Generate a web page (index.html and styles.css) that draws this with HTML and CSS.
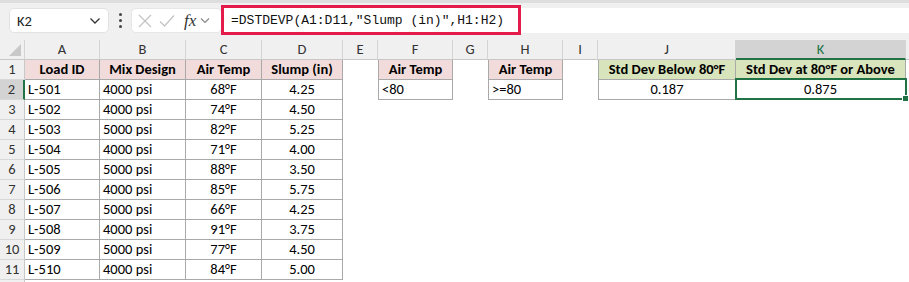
FILE: index.html
```html
<!DOCTYPE html>
<html>
<head>
<meta charset="utf-8">
<link rel="stylesheet" href="styles.css">
</head>
<body>
<div class="toolbar">
  <div class="namebox"><span>K2</span>
    <svg class="chev" width="12" height="8" viewBox="0 0 12 8"><path d="M1.5 1.5 L6 6 L10.5 1.5" fill="none" stroke="#333" stroke-width="1.3"/></svg>
  </div>
  <div class="dots"><i></i><i></i><i></i></div>
  <div class="iconbox">
    <svg width="14" height="14" viewBox="0 0 14 14"><path d="M1 1 L13 13 M13 1 L1 13" stroke="#c4c4c4" stroke-width="1.3" fill="none"/></svg>
    <svg width="16" height="14" viewBox="0 0 16 14"><path d="M1 7.5 L5.5 12 L15 1.5" stroke="#c4c4c4" stroke-width="1.3" fill="none"/></svg>
    <span class="fx">fx</span>
    <svg width="10" height="7" viewBox="0 0 10 7"><path d="M1 1.5 L5 5.5 L9 1.5" fill="none" stroke="#888" stroke-width="1.2"/></svg>
  </div>
  <div class="formula">=DSTDEVP(A1:D11,"Slump (in)",H1:H2)</div>
  <div class="highlight"></div>
</div>
<div class="sheet">
  <div class="corner"><svg width="12" height="12" viewBox="0 0 12 12"><path d="M12 0 L12 12 L0 12 Z" fill="#c8c8c8"/></svg></div>
  <div class="ch">A</div><div class="ch">B</div><div class="ch">C</div><div class="ch">D</div><div class="ch">E</div><div class="ch">F</div><div class="ch">G</div><div class="ch">H</div><div class="ch">I</div><div class="ch">J</div><div class="ch sel">K</div><div class="ch last"></div>

  <div class="rh">1</div>
  <div class="c b hd pink">Load ID</div><div class="c b hd pink">Mix Design</div><div class="c b hd pink">Air Temp</div><div class="c b hd pink">Slump (in)</div>
  <div class="c"></div><div class="c b bl hd pink">Air Temp</div><div class="c"></div><div class="c b bl hd pink">Air Temp</div><div class="c"></div>
  <div class="c b bl hd green">Std Dev Below 80°F</div><div class="c b hd green">Std Dev at 80°F or Above</div><div class="c"></div>

  <div class="rh rsel">2</div>
  <div class="c b">L-501</div><div class="c b">4000 psi</div><div class="c b ctr">68°F</div><div class="c b ctr">4.25</div>
  <div class="c"></div><div class="c b bl">&lt;80</div><div class="c"></div><div class="c b bl">&gt;=80</div><div class="c"></div>
  <div class="c b bl ctr">0.187</div><div class="c b ctr active">0.875</div><div class="c"></div>

  <div class="rh">3</div><div class="c b">L-502</div><div class="c b">4000 psi</div><div class="c b ctr">74°F</div><div class="c b ctr">4.50</div><div class="c span8"></div>
  <div class="rh">4</div><div class="c b">L-503</div><div class="c b">5000 psi</div><div class="c b ctr">82°F</div><div class="c b ctr">5.25</div><div class="c span8"></div>
  <div class="rh">5</div><div class="c b">L-504</div><div class="c b">4000 psi</div><div class="c b ctr">71°F</div><div class="c b ctr">4.00</div><div class="c span8"></div>
  <div class="rh">6</div><div class="c b">L-505</div><div class="c b">5000 psi</div><div class="c b ctr">88°F</div><div class="c b ctr">3.50</div><div class="c span8"></div>
  <div class="rh">7</div><div class="c b">L-506</div><div class="c b">4000 psi</div><div class="c b ctr">85°F</div><div class="c b ctr">5.75</div><div class="c span8"></div>
  <div class="rh">8</div><div class="c b">L-507</div><div class="c b">5000 psi</div><div class="c b ctr">66°F</div><div class="c b ctr">4.25</div><div class="c span8"></div>
  <div class="rh">9</div><div class="c b">L-508</div><div class="c b">4000 psi</div><div class="c b ctr">91°F</div><div class="c b ctr">3.75</div><div class="c span8"></div>
  <div class="rh">10</div><div class="c b">L-509</div><div class="c b">5000 psi</div><div class="c b ctr">77°F</div><div class="c b ctr">4.50</div><div class="c span8"></div>
  <div class="rh">11</div><div class="c b">L-510</div><div class="c b">4000 psi</div><div class="c b ctr">84°F</div><div class="c b ctr">5.00</div><div class="c span8"></div>
  <div class="rh stub"></div><div class="c span12 stub"></div>
</div>
</body>
</html>
```

FILE: styles.css
```css
* { box-sizing: border-box; }
html, body { margin: 0; padding: 0; background: #fff; overflow: hidden; }
body { width: 909px; height: 282px; font-family: Carlito, Lato, "Liberation Sans", sans-serif; color: #000; }

.toolbar {
  position: relative;
  height: 40px;
  background: #f0f0f0;
  border-top: 3px solid #dedede;
  display: flex;
  align-items: flex-start;
  padding-top: 5px;
}
.namebox {
  margin-left: 9px;
  width: 100px;
  height: 25px;
  background: #fff;
  border: 1px solid #e2e2e2;
  border-radius: 5px;
  display: flex;
  align-items: center;
  justify-content: space-between;
  padding: 0 7px 0 7px;
  font-size: 14.5px;
  color: #222;
}
.namebox .chev { margin-top: 1px; }
.dots {
  width: 22px;
  height: 25px;
  display: flex;
  flex-direction: column;
  align-items: center;
  justify-content: center;
  gap: 3px;
}
.dots i { display: block; width: 3px; height: 3px; background: #444; border-radius: 50%; }
.iconbox {
  width: 91px;
  height: 25px;
  background: #fff;
  border: 1px solid #e6e6e6;
  border-radius: 5px;
  display: flex;
  align-items: center;
  padding-left: 6px;
  gap: 8px;
}
.iconbox svg:nth-child(2) { margin-left: -1px; }
.fx {
  font-family: "Liberation Serif", "DejaVu Serif", serif;
  font-style: italic;
  font-size: 17px;
  color: #333;
  margin-left: 1px;
  margin-right: -4px;
}
.formula {
  flex: 1;
  height: 25px;
  background: #fff;
  font-family: "Liberation Mono", "DejaVu Sans Mono", monospace;
  font-size: 13px;
  line-height: 25px;
  padding-left: 9px;
  color: #111;
}
.highlight {
  position: absolute;
  left: 221px;
  top: 2px;
  width: 300px;
  height: 30px;
  border: 3px solid #e31c4c;
}

.sheet {
  display: grid;
  grid-template-columns: 25px 75px 86px 76px 81px 35px 75px 35px 75px 35px 138px 170px 1fr;
  grid-template-rows: repeat(12, 20px) 2px;
  height: 242px;
  overflow: hidden;
}
.corner {
  background: #f0f0f0;
  border-right: 1px solid #d4d4d4;
  border-bottom: 1px solid #c8c8c8;
  display: flex;
  align-items: flex-end;
  justify-content: flex-end;
  padding: 0 3px 3px 0;
}
.ch {
  background: #f0f0f0;
  border-right: 1px solid #d4d4d4;
  border-bottom: 1px solid #c8c8c8;
  text-align: center;
  font-size: 14.5px;
  line-height: 19px;
  color: #333;
}
.ch.sel {
  background: #d3d3d3;
  color: #217346;
  border-bottom: 2px solid #217346;
}
.ch.last { border-right: none; }
.rh {
  grid-column: 1;
  background: #f0f0f0;
  border-right: 1px solid #c8c8c8;
  border-bottom: 1px solid #d8d8d8;
  text-align: center;
  font-size: 14.5px;
  line-height: 19px;
  color: #333;
}
.rh.rsel {
  background: #d3d3d3;
  border-right: 2px solid #217346;
}
.rh.stub { border-bottom: none; }
.c {
  font-size: 14.5px;
  line-height: 19px;
  padding-left: 3px;
  white-space: nowrap;
  overflow: hidden;
}
.span8 { grid-column: span 8; }
.span12 { grid-column: span 12; }
.b {
  border-right: 1px solid #a9a9a9;
  border-bottom: 1px solid #a9a9a9;
}
.bl { border-left: 1px solid #a9a9a9; }
.ctr { text-align: center; padding-left: 0; }
.hd { font-weight: bold; text-align: center; padding-left: 0; }
.pink { background: #f2dcdb; }
.green { background: #d8e4bc; }
.active {
  position: relative;
  overflow: visible;
}
.active::before {
  content: "";
  position: absolute;
  left: -1px;
  top: -2px;
  right: -2px;
  bottom: -1px;
  border: 2px solid #217346;
}
.active::after {
  content: "";
  position: absolute;
  right: -4px;
  bottom: -3px;
  width: 5px;
  height: 5px;
  background: #217346;
  border: 1px solid #fff;
  box-sizing: content-box;
}
```
